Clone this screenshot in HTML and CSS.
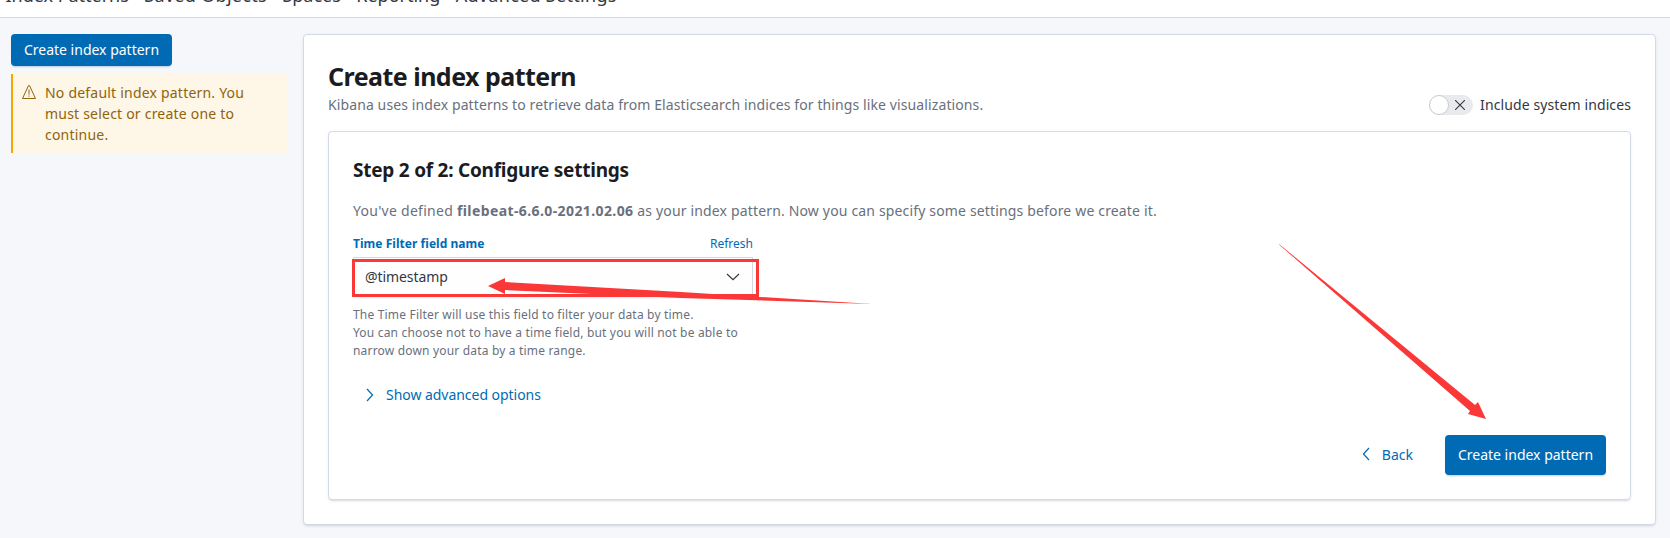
FILE: index.html
```
<!DOCTYPE html>
<html lang="en">
<head>
<meta charset="utf-8">
<title>Create index pattern</title>
<link rel="stylesheet" href="styles.css">
</head>
<body>
<nav class="tabs">
  <a>Index Patterns</a><a class="wide">Saved Objects</a><a>Spaces</a><a>Reporting</a><a class="wide">Advanced Settings</a>
</nav>
<div class="page">
  <aside class="side">
    <button class="btn btn-small">Create index pattern</button>
    <div class="callout">
      <svg width="16" height="16" viewBox="0 0 16 16" fill="none" stroke="currentColor"><path d="M7.5 1.6 1.5 14.5h13L8.5 1.6a.6.6 0 0 0-1 0z" stroke-linejoin="round"/><path d="M8 5.5v5M8 11.5v1.2"/></svg>
      <p>No default index pattern. You must select or create one to continue.</p>
    </div>
  </aside>
  <main class="panel">
    <h1>Create index pattern</h1>
    <div class="intro">
      <p>Kibana uses index patterns to retrieve data from Elasticsearch indices for things like visualizations.</p>
      <label class="switch">
        <span class="track"><span class="knob"></span><svg width="10" height="10" viewBox="0 0 10 10" stroke="#343741" stroke-width="1.1"><path d="M0 0l10 10M10 0 0 10"/></svg></span>
        <span>Include system indices</span>
      </label>
    </div>
    <section class="panel step">
      <h2>Step 2 of 2: Configure settings</h2>
      <p class="defined"><span class="lead">You've defined </span><strong>filebeat-6.6.0-2021.02.06</strong><span> as your index pattern. Now you can specify some settings before we create it.</span></p>
      <div class="field">
        <div class="field-head"><b>Time Filter field name</b><a>Refresh</a></div>
        <div class="select"><span>@timestamp</span><svg width="14" height="8" viewBox="0 0 14 8" fill="none" stroke="#343741" stroke-width="1.2"><path d="M1 1l6 5.6L13 1"/></svg></div>
        <p class="help">The Time Filter will use this field to filter your data by time.<br>You can choose not to have a time field, but you will not be able to narrow down your data by a time range.</p>
      </div>
      <a class="advanced"><svg width="8" height="14" viewBox="0 0 8 14" fill="none" stroke="currentColor" stroke-width="1.2"><path d="M1 1l5.6 6L1 13"/></svg>Show advanced options</a>
      <div class="footer">
        <a class="back"><svg width="8" height="14" viewBox="0 0 8 14" fill="none" stroke="currentColor" stroke-width="1.2"><path d="M7 1 1.4 7 7 13"/></svg>Back</a>
        <button class="btn">Create index pattern</button>
      </div>
    </section>
  </main>
</div>
<svg class="marks" width="1670" height="538" viewBox="0 0 1670 538" fill="#fb3838">
  <rect x="353.5" y="260.5" width="404" height="35" fill="none" stroke="#fb3838" stroke-width="3"/>
  <path d="M488 286l17-8v4l176 10 191 12-191-6-176-8v4z"/>
  <path d="M1279 244l.5 1L1470 411l-2 3 18 5-8-17-3 3z"/>
</svg>
</body>
</html>
```
FILE: styles.css
```
* { box-sizing: border-box; }
body {
  margin: 0;
  height: 538px;
  overflow: hidden;
  background: #f5f7fa;
  color: #343741;
  font: 14px/21px "Noto Sans", "Open Sans", sans-serif;
}
h1, h2, p { margin: 0; }
a { color: #006bb4; }
svg { flex: none; }
.tabs {
  display: flex;
  align-items: flex-end;
  gap: 15.5px;
  height: 18px;
  padding: 0 0 8px 5.5px;
  background: #fff;
  border-bottom: 1px solid #d3dae6;
}
.tabs a { color: #343741; font-size: 18px; line-height: 27px; letter-spacing: -.02px; white-space: nowrap; }
.tabs .wide { letter-spacing: .3px; }
.page { display: flex; gap: 15px; padding: 16px 14px 13px 11px; }
.side { width: 277px; }
.btn {
  display: block;
  width: 161px;
  height: 40px;
  padding: 0 0 2px;
  border: 0;
  border-radius: 4px;
  background: #006bb4;
  box-shadow: 0 2px 2px -1px rgba(54, 97, 126, .3);
  color: #fff;
  font: inherit;
}
.btn-small { height: 32px; }
.callout {
  display: flex;
  gap: 8px;
  margin-top: 8px;
  padding: 8px 30px 8px 8px;
  border-left: 2px solid #f5a700;
  background: #fef6e6;
  color: #8f640c;
}
.callout svg { margin-top: 2px; }
.callout p { letter-spacing: .21px; }
.panel {
  flex: 1;
  padding: 24px;
  border: 1px solid #d3dae6;
  border-radius: 4px;
  background: #fff;
  box-shadow: 0 2px 2px -1px rgba(152, 162, 179, .3), 0 1px 5px -2px rgba(152, 162, 179, .3);
}
h1 { color: #1a1c21; font-size: 25px; line-height: 34px; letter-spacing: -.53px; }
.intro {
  display: flex;
  justify-content: space-between;
  height: 24px;
  line-height: 24px;
  color: #69707d;
  letter-spacing: .105px;
}
.switch { display: flex; align-items: center; gap: 7px; color: #343741; }
.track {
  display: flex;
  align-items: center;
  gap: 6px;
  width: 44px;
  height: 20px;
  border-radius: 10px;
  background: #e9eaee;
}
.knob { width: 20px; height: 20px; border: 1px solid #c9cbcd; border-radius: 50%; background: #fff; }
.step { margin-top: 14px; height: 369px; }
h2 { color: #1a1c21; font-size: 19px; line-height: 28px; letter-spacing: -.24px; }
.defined { margin-top: 16px; color: #69707d; letter-spacing: .16px; white-space: pre; }
.lead { letter-spacing: .27px; }
.defined strong { letter-spacing: .4px; }
.field { width: 400px; margin-top: 14px; font-size: 12px; line-height: 18px; }
.field-head { display: flex; justify-content: space-between; color: #006bb4; }
.field-head b { letter-spacing: .04px; }
.select {
  display: flex;
  align-items: center;
  justify-content: space-between;
  height: 40px;
  margin-top: 4px;
  padding: 0 12px 0 11px;
  border: 1px solid #d5d9dd;
  background: #fefefe;
  box-shadow: 0 3px 2px -2px rgba(152, 162, 179, .25);
  font-size: 14px;
  letter-spacing: -.08px;
}
.help { margin-top: 9px; color: #69707d; letter-spacing: .18px; }
.advanced { display: flex; align-items: center; gap: 12px; margin: 24px 0 0 13px; letter-spacing: -.04px; }
.footer { display: flex; align-items: center; justify-content: flex-end; gap: 32px; margin-top: 30px; }
.back { display: flex; align-items: center; gap: 12px; height: 21px; margin-bottom: 2px; }
.marks { position: absolute; top: 0; left: 0; pointer-events: none; }
```
